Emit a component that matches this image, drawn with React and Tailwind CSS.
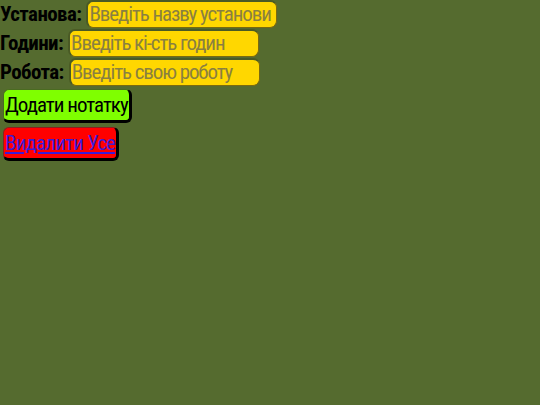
import React, { useState } from 'react';

const font = { fontFamily: '"Roboto Condensed", Roboto, sans-serif', fontStretch: 'condensed' };

function Field({ label, placeholder, value, onChange }) {
  return (
    <div className="flex items-center h-[28px] whitespace-nowrap">
      <label className="font-bold text-[21px] tracking-[-0.6px] leading-none text-black mr-[5px]">{label}</label>
      <input
        className="w-[191px] h-[28px] bg-[#ffd700] rounded-[7px] px-[1px] text-[21px] tracking-[-1.1px] text-black placeholder:text-[#8a8040] outline-none border-t-2 border-l-2 border-[#4a5a25] border-r border-b border-r-[#7a6a10] border-b-[#7a6a10]"
        style={font}
        placeholder={placeholder}
        value={value}
        onChange={(e) => onChange(e.target.value)}
      />
    </div>
  );
}

export default function App() {
  const [place, setPlace] = useState('');
  const [hours, setHours] = useState('');
  const [work, setWork] = useState('');

  return (
    <div className="w-[540px] h-[405px] bg-[#556b2f] overflow-hidden" style={font}>
      <div className="flex flex-col gap-[1px]">
        <Field label="Установа:" placeholder="Введіть назву установи" value={place} onChange={setPlace} />
        <Field label="Години:" placeholder="Введіть кі-сть годин" value={hours} onChange={setHours} />
        <Field label="Робота:" placeholder="Введіть свою роботу" value={work} onChange={setWork} />
      </div>
      <div className="flex flex-col items-start gap-[4px] mt-[3px] ml-[3px]">
        <button
          className="h-[34px] px-[1px] bg-[#7fff00] rounded-[6px] text-[21px] tracking-[-1px] text-black border-t border-l border-[#4a6b20] border-r-[3px] border-b-[3px] border-r-black border-b-black"
          style={font}
        >
          Додати нотатку
        </button>
        <button
          className="h-[34px] px-[1px] bg-[#ff0000] rounded-[6px] text-[21px] tracking-[-0.8px] border-t border-l border-[#8a2020] border-r-[3px] border-b-[3px] border-r-black border-b-black"
          style={font}
        >
          <a href="#" className="text-[#3b1cd6] underline">Видалити Усе</a>
        </button>
      </div>
    </div>
  );
}
